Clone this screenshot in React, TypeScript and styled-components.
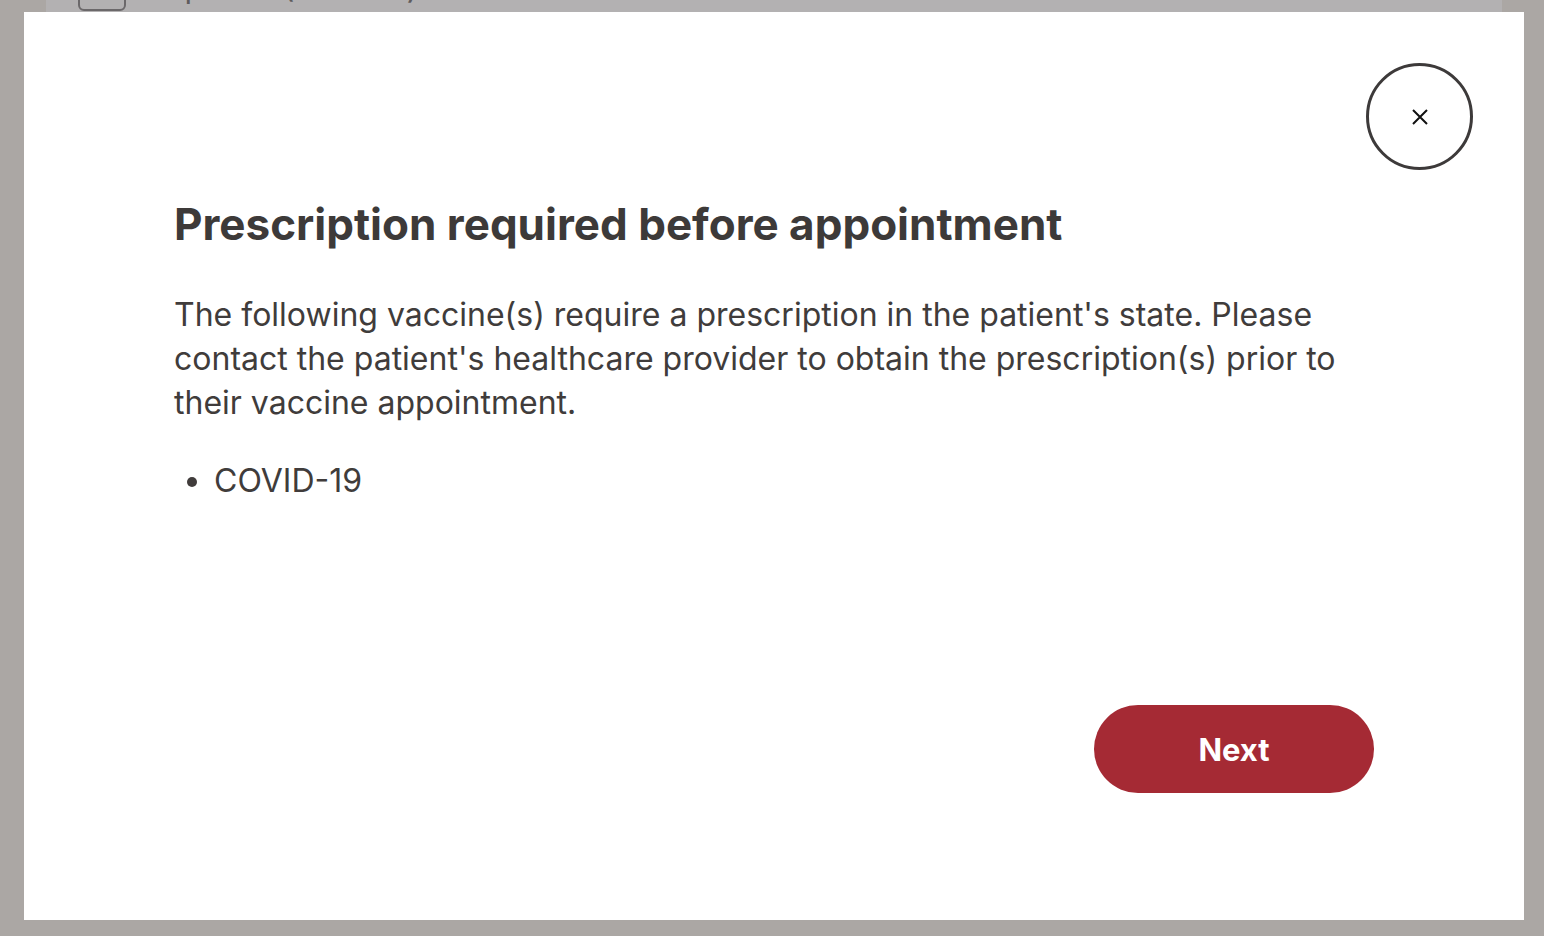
import React from "react";
import styled, { createGlobalStyle } from "styled-components";

const Global = createGlobalStyle`
  html, body { margin: 0; padding: 0; }
  body {
    background: #aba7a4;
    font-family: Inter, "Noto Sans", "Liberation Sans", sans-serif;
    overflow: hidden;
  }
`;

const Page = styled.div`
  width: 1456px;
  margin-left: 46px;
  min-height: 936px;
  background: #b3b1b2;
  padding: 0 32px;
  box-sizing: border-box;
`;

const CheckRow = styled.label`
  display: flex;
  align-items: flex-end;
  gap: 20px;
  margin-top: -37px;
  color: #5f5c5d;
  font-size: 26px;
  line-height: 26px;
  font-weight: 500;
`;

const CheckBox = styled.span`
  width: 48px;
  height: 48px;
  border: 2px solid #6b686a;
  border-radius: 6px;
  box-sizing: border-box;
`;

const CheckLabel = styled.span`
  margin-bottom: 8px;
`;

const Overlay = styled.div`
  position: fixed;
  inset: 0;
  padding: 12px 20px 16px 24px;
  box-sizing: border-box;
`;

const Modal = styled.div`
  width: 1500px;
  height: 908px;
  background: #ffffff;
  display: flex;
  flex-direction: column;
  box-sizing: border-box;
  color: #3d3a39;
`;

const Header = styled.div`
  display: flex;
  justify-content: flex-end;
  padding: 51px 51px 0 0;
`;

const CloseButton = styled.button`
  width: 107px;
  height: 107px;
  border-radius: 50%;
  border: 3px solid #3d3a3a;
  background: #fff;
  display: flex;
  align-items: center;
  justify-content: center;
  padding: 0;
  cursor: pointer;
`;

const Body = styled.div`
  padding: 0 150px;
  display: flex;
  flex-direction: column;
  flex: 1;
`;

const Title = styled.h2`
  margin: 26px 0 0;
  font-size: 44px;
  line-height: 56px;
  font-weight: 700;
  color: #3d3a39;
`;

const Text = styled.p`
  margin: 41px 0 0;
  font-size: 32px;
  line-height: 44px;
  font-weight: 400;
  max-width: 1180px;
  color: #403c3b;
`;

const List = styled.ul`
  margin: 34px 0 0;
  padding-left: 40px;
  font-size: 32px;
  line-height: 44px;
  color: #403c3b;
`;

const Footer = styled.div`
  display: flex;
  justify-content: flex-end;
  margin-top: auto;
  padding-bottom: 127px;
`;

const NextButton = styled.button`
  width: 280px;
  height: 88px;
  border-radius: 44px;
  border: none;
  background: #a52a34;
  color: #ffffff;
  font-family: Inter, "Noto Sans", sans-serif;
  font-size: 31px;
  font-weight: 700;
  cursor: pointer;
`;

export default function App() {
  return (
    <>
      <Global />
      <Page>
        <CheckRow>
          <CheckBox />
          <CheckLabel>Ship to me (Standard)</CheckLabel>
        </CheckRow>
      </Page>
      <Overlay>
        <Modal role="dialog">
          <Header>
            <CloseButton aria-label="Close">
              <svg width="18" height="18" viewBox="0 0 18 18">
                <path d="M2 2L16 16M16 2L2 16" stroke="#111" strokeWidth="2" />
              </svg>
            </CloseButton>
          </Header>
          <Body>
            <Title>Prescription required before appointment</Title>
            <Text>
              The following vaccine(s) require a prescription in the patient's state. Please
              contact the patient's healthcare provider to obtain the prescription(s) prior to
              their vaccine appointment.
            </Text>
            <List>
              <li>COVID-19</li>
            </List>
            <Footer>
              <NextButton>Next</NextButton>
            </Footer>
          </Body>
        </Modal>
      </Overlay>
    </>
  );
}
